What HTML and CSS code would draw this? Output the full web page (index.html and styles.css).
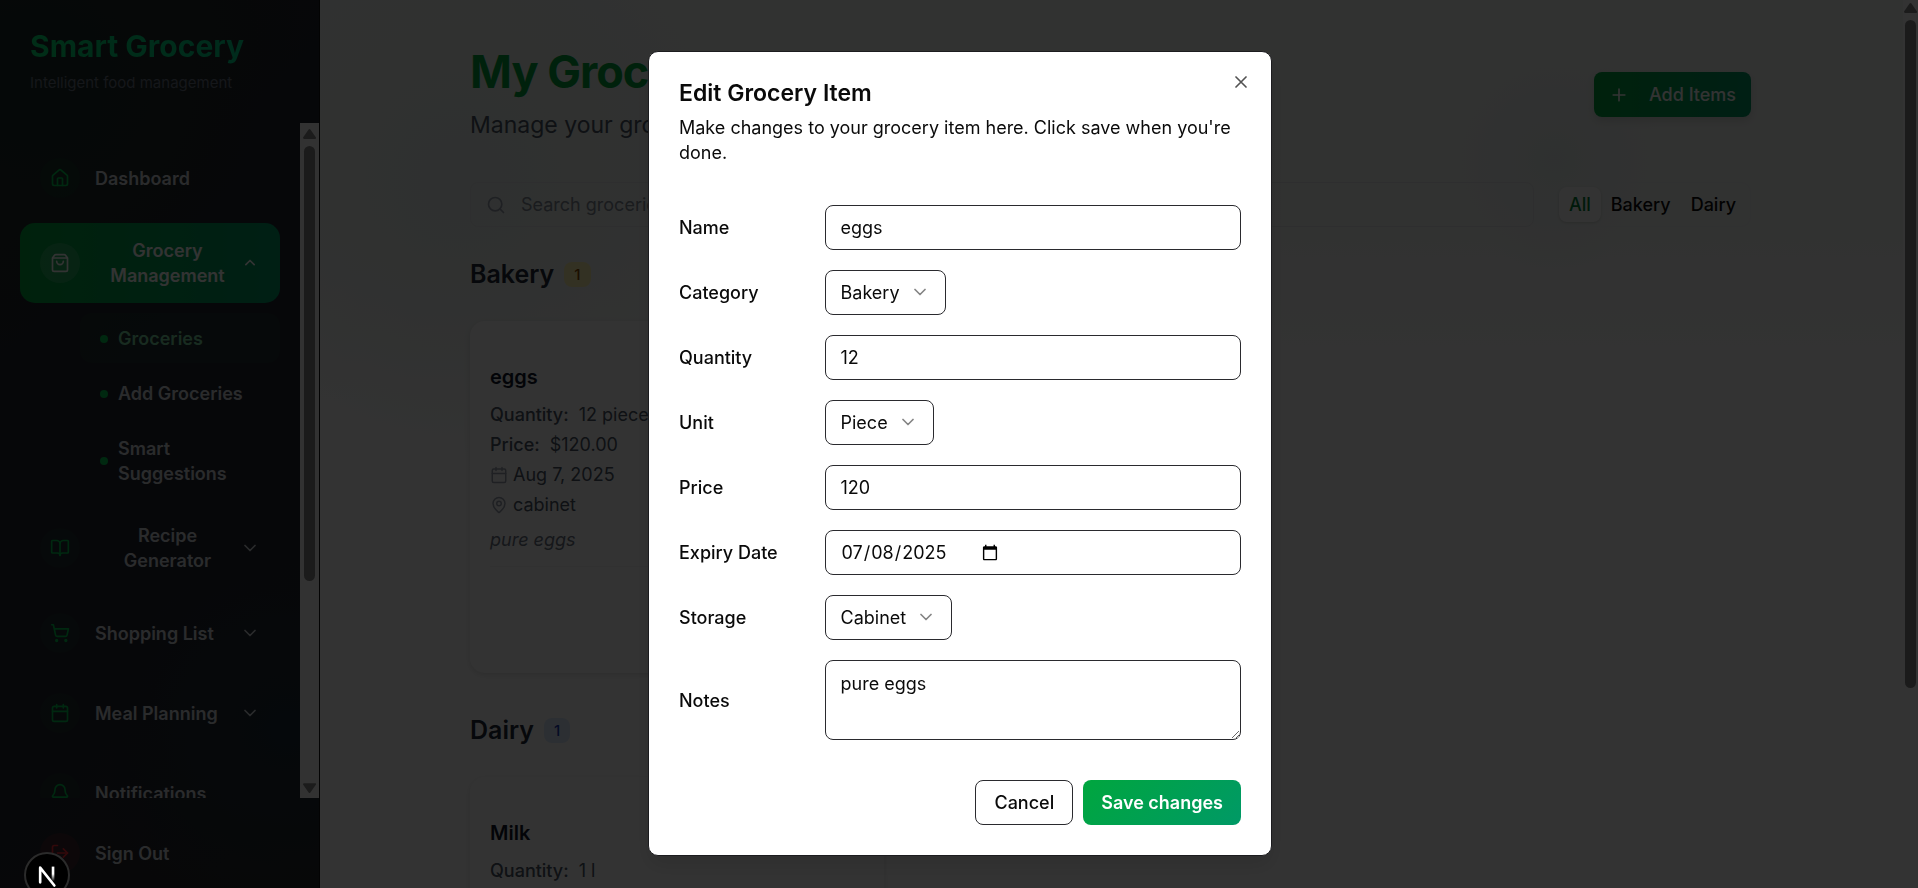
FILE: index.html
```html
<!DOCTYPE html>
<html lang="en">
<head>
    <meta charset="UTF-8">
    <meta name="viewport" content="width=device-width, initial-scale=1.0">
    <title>Smart Grocery</title>
    <link rel="stylesheet" href="styles.css">
</head>
<body>
    <!-- Shared icons -->
    <svg class="sprite" aria-hidden="true">
        <symbol id="chevron-down" viewBox="0 0 24 24"><path d="m6 9 6 6 6-6"/></symbol>
        <symbol id="chevron-up" viewBox="0 0 24 24"><path d="m17 14-5-5-5 5"/></symbol>
        <symbol id="calendar" viewBox="0 0 24 24"><path d="M8 2v4M16 2v4M3 10h18"/><rect width="18" height="18" x="3" y="4" rx="2"/></symbol>
        <symbol id="arrow-up" viewBox="0 0 12 9"><path d="M6 1 11 8H1Z"/></symbol>
        <symbol id="arrow-down" viewBox="0 0 12 9"><path d="M6 8 11 1H1Z"/></symbol>
    </svg>

    <div class="app">
        <!-- Sidebar -->
        <aside class="sidebar">
            <div class="brand">
                <h2>Smart Grocery</h2>
                <p>Intelligent food management</p>
            </div>

            <div class="nav-wrap">
                <nav class="nav">
                    <a class="nav-item" href="#">
                        <span class="nav-icon"><svg viewBox="0 0 24 24"><path d="M15 21v-8a1 1 0 0 0-1-1h-4a1 1 0 0 0-1 1v8"/><path d="M3 10a2 2 0 0 1 .709-1.528l7-5.999a2 2 0 0 1 2.582 0l7 5.999A2 2 0 0 1 21 10v9a2 2 0 0 1-2 2H5a2 2 0 0 1-2-2z"/></svg></span>
                        <span>Dashboard</span>
                    </a>
                    <button class="nav-item active" type="button">
                        <span class="nav-icon"><svg viewBox="0 0 24 24"><path d="M16 10a4 4 0 0 1-8 0"/><path d="M3.103 6.034h17.794"/><path d="M3.4 5.467a2 2 0 0 0-.4 1.2V20a2 2 0 0 0 2 2h14a2 2 0 0 0 2-2V6.667a2 2 0 0 0-.4-1.2l-2-2.667A2 2 0 0 0 17 2H7a2 2 0 0 0-1.6.8z"/></svg></span>
                        <span>Grocery Management</span>
                        <svg class="chevron"><use href="#chevron-up"/></svg>
                    </button>
                    <div class="subnav">
                        <a class="current" href="#">Groceries</a>
                        <a href="#">Add Groceries</a>
                        <a href="#">Smart Suggestions</a>
                    </div>
                    <button class="nav-item" type="button">
                        <span class="nav-icon"><svg viewBox="0 0 24 24"><path d="M12 7v14"/><path d="M3 18a1 1 0 0 1-1-1V4a1 1 0 0 1 1-1h5a4 4 0 0 1 4 4 4 4 0 0 1 4-4h5a1 1 0 0 1 1 1v13a1 1 0 0 1-1 1h-6a3 3 0 0 0-3 3 3 3 0 0 0-3-3z"/></svg></span>
                        <span>Recipe Generator</span>
                        <svg class="chevron"><use href="#chevron-down"/></svg>
                    </button>
                    <button class="nav-item" type="button">
                        <span class="nav-icon"><svg viewBox="0 0 24 24"><circle cx="8" cy="21" r="1"/><circle cx="19" cy="21" r="1"/><path d="M2.05 2.05h2l2.66 12.42a2 2 0 0 0 2 1.58h9.78a2 2 0 0 0 1.95-1.57l1.65-7.43H5.12"/></svg></span>
                        <span>Shopping List</span>
                        <svg class="chevron"><use href="#chevron-down"/></svg>
                    </button>
                    <button class="nav-item" type="button">
                        <span class="nav-icon"><svg><use href="#calendar"/></svg></span>
                        <span>Meal Planning</span>
                        <svg class="chevron"><use href="#chevron-down"/></svg>
                    </button>
                    <a class="nav-item" href="#">
                        <span class="nav-icon"><svg viewBox="0 0 24 24"><path d="M10.268 21a2 2 0 0 0 3.464 0"/><path d="M3.262 15.326A1 1 0 0 0 4 17h16a1 1 0 0 0 .74-1.673C19.41 13.956 18 12.499 18 8A6 6 0 0 0 6 8c0 4.499-1.411 5.956-2.738 7.326"/></svg></span>
                        <span>Notifications</span>
                    </a>
                </nav>
                <div class="scrollbar nav-scrollbar" aria-hidden="true">
                    <svg class="arrow"><use href="#arrow-up"/></svg>
                    <div class="track"><div class="thumb"></div></div>
                    <svg class="arrow"><use href="#arrow-down"/></svg>
                </div>
            </div>

            <div class="sidebar-footer">
                <button class="nav-item" type="button">
                    <span class="nav-icon danger"><svg viewBox="0 0 24 24"><path d="m16 17 5-5-5-5"/><path d="M21 12H9"/><path d="M9 21H5a2 2 0 0 1-2-2V5a2 2 0 0 1 2-2h4"/></svg></span>
                    <span>Sign Out</span>
                </button>
            </div>
        </aside>

        <!-- Main Content -->
        <main class="main">
            <div class="container">
                <header class="page-header">
                    <div>
                        <h1>My Groceries</h1>
                        <p>Manage your grocery inventory</p>
                    </div>
                    <button class="add-button" type="button">
                        <svg viewBox="0 0 24 24"><path d="M5 12h14M12 5v14"/></svg>
                        Add Items
                    </button>
                </header>

                <div class="toolbar">
                    <div class="search">
                        <svg viewBox="0 0 24 24"><circle cx="11" cy="11" r="8"/><path d="m21 21-4.300-4.300"/></svg>
                        <input type="search" aria-label="Search groceries" placeholder="Search groceries...">
                    </div>
                    <div class="tabs">
                        <button class="tab selected" type="button">All</button>
                        <button class="tab" type="button">Bakery</button>
                        <button class="tab" type="button">Dairy</button>
                    </div>
                </div>

                <section class="group">
                    <h2>Bakery <span class="badge yellow">1</span></h2>
                    <div class="cards">
                        <article class="card">
                            <h3>eggs</h3>
                            <p><strong>Quantity:</strong> 12 piece</p>
                            <p><strong>Price:</strong> $120.00</p>
                            <p class="meta"><svg><use href="#calendar"/></svg>Aug 7, 2025</p>
                            <p class="meta"><svg viewBox="0 0 24 24"><path d="M20 10c0 4.993-5.539 10.193-7.399 11.799a1 1 0 0 1-1.202 0C9.539 20.193 4 14.993 4 10a8 8 0 0 1 16 0"/><circle cx="12" cy="10" r="3"/></svg>cabinet</p>
                            <p class="notes">pure eggs</p>
                            <div class="card-footer"></div>
                        </article>
                    </div>
                </section>

                <section class="group">
                    <h2>Dairy <span class="badge blue">1</span></h2>
                    <div class="cards">
                        <article class="card">
                            <h3>Milk</h3>
                            <p><strong>Quantity:</strong> 1 l</p>
                        </article>
                    </div>
                </section>
            </div>
        </main>

        <div class="scrollbar page-scrollbar" aria-hidden="true">
            <svg class="arrow"><use href="#arrow-up"/></svg>
            <div class="track"><div class="thumb"></div></div>
        </div>
    </div>

    <!-- Edit dialog -->
    <div class="overlay">
        <form class="dialog" role="dialog" aria-labelledby="dialog-title">
            <button class="close" type="button" aria-label="Close"><svg viewBox="0 0 24 24"><path d="M18 6 6 18M6 6l12 12"/></svg></button>
            <div class="dialog-header">
                <h2 id="dialog-title">Edit Grocery Item</h2>
                <p>Make changes to your grocery item here. Click save when you're done.</p>
            </div>

            <div class="fields">
                <div class="field">
                    <label for="name">Name</label>
                    <input class="input" id="name" type="text" value="eggs">
                </div>
                <div class="field">
                    <label for="category">Category</label>
                    <div class="select">
                        <select id="category"><option selected>Bakery</option><option>Dairy</option></select>
                        <svg><use href="#chevron-down"/></svg>
                    </div>
                </div>
                <div class="field">
                    <label for="quantity">Quantity</label>
                    <input class="input" id="quantity" type="number" value="12">
                </div>
                <div class="field">
                    <label for="unit">Unit</label>
                    <div class="select">
                        <select id="unit"><option selected>Piece</option><option>l</option></select>
                        <svg><use href="#chevron-down"/></svg>
                    </div>
                </div>
                <div class="field">
                    <label for="price">Price</label>
                    <input class="input" id="price" type="number" value="120">
                </div>
                <div class="field">
                    <label for="expiry">Expiry Date</label>
                    <input class="input" id="expiry" type="date" value="2025-07-08">
                </div>
                <div class="field">
                    <label for="storage">Storage</label>
                    <div class="select">
                        <select id="storage"><option selected>Cabinet</option><option>Fridge</option></select>
                        <svg><use href="#chevron-down"/></svg>
                    </div>
                </div>
                <div class="field">
                    <label for="notes">Notes</label>
                    <textarea class="input" id="notes">pure eggs</textarea>
                </div>
            </div>

            <div class="dialog-footer">
                <button class="button" type="button">Cancel</button>
                <button class="button primary" type="submit">Save changes</button>
            </div>
        </form>
    </div>

    <button class="dev-badge" type="button" aria-label="Open dev tools">
        <svg viewBox="0 0 40 40">
            <defs>
                <linearGradient id="fade-a" x1="0" y1="0" x2="0" y2="1"><stop offset="0.500" stop-color="#fff"/><stop offset="1" stop-color="#fff" stop-opacity="0"/></linearGradient>
            </defs>
            <path d="M13.500 27V13L27 30" fill="none" stroke="#fff" stroke-width="2.500"/>
            <rect x="24.500" y="12" width="2.500" height="14" fill="url(#fade-a)"/>
        </svg>
    </button>
</body>
</html>
```
FILE: styles.css
```css
* {
    box-sizing: border-box;
}
body {
    margin: 0;
    font-family: Inter, "Liberation Sans", sans-serif;
    font-size: 18px;
    line-height: 25px;
    color: #0a0a0a;
    overflow: hidden;
}
h1, h2, h3, p {
    margin: 0;
}
button, input, select, textarea {
    font: inherit;
    color: inherit;
}
button {
    border: none;
    background: none;
    cursor: pointer;
}
a {
    color: inherit;
    text-decoration: none;
}
svg {
    width: 20px;
    height: 20px;
    flex-shrink: 0;
    fill: none;
    stroke: currentColor;
    stroke-width: 2;
    stroke-linecap: round;
    stroke-linejoin: round;
}
.sprite {
    display: none;
}
.app {
    display: flex;
    height: 100vh;
}

/* Sidebar */
.sidebar {
    width: 320px;
    flex-shrink: 0;
    display: flex;
    flex-direction: column;
    border-right: 1px solid #101010;
    background: radial-gradient(circle at 90% 82%, #1c2c38, transparent 200px),
                radial-gradient(circle at 10% 8%, #1a2c28, transparent 280px),
                linear-gradient(135deg, #282828, #202430 40%, #202430 60%, #282828);
}
.brand {
    height: 123px;
    padding: 26px 30px 0;
}
.brand h2 {
    font-size: 30px;
    line-height: 40px;
    font-weight: 700;
    color: transparent;
    background: linear-gradient(90deg, #05df72, #00d492);
    background-clip: text;
}
.brand p {
    margin-top: 4px;
    font-size: 15px;
    color: #6a7282;
}
.nav-wrap {
    flex: 1;
    min-height: 0;
    display: flex;
}
.nav {
    flex: 1;
    display: flex;
    flex-direction: column;
    gap: 10px;
    padding: 20px;
    overflow: hidden;
}
.nav-item {
    display: flex;
    flex-shrink: 0;
    align-items: center;
    gap: 15px;
    width: 100%;
    padding: 15px 20px;
    border-radius: 15px;
    font-weight: 600;
    color: #d1d5db;
    text-align: center;
}
.nav-item .chevron {
    margin-left: auto;
}
.nav-item:has(.chevron) {
    gap: 0;
}
.nav-item:has(.chevron) .nav-icon {
    margin-right: 15px;
}
.nav-item.active {
    color: #fff;
    background: linear-gradient(90deg, #00a63e, #009966);
}
.nav-icon {
    display: grid;
    place-items: center;
    flex-shrink: 0;
    width: 40px;
    height: 40px;
    border-radius: 50%;
    color: #00c950;
    background: rgba(0, 201, 80, 0.06);
}
.active .nav-icon {
    color: #fff;
    background: rgba(255, 255, 255, 0.15);
}
.nav-icon.danger {
    color: #fb2c36;
    background: rgba(251, 44, 54, 0.12);
}
.subnav {
    display: flex;
    flex-direction: column;
    gap: 5px;
    padding-left: 60px;
}
.subnav a {
    display: flex;
    align-items: center;
    gap: 10px;
    padding: 13px 20px 12px;
    border-radius: 12px;
    font-weight: 600;
    color: #d1d5db;
}
.subnav a::before {
    content: "";
    flex-shrink: 0;
    width: 8px;
    height: 8px;
    border-radius: 50%;
    background: #00c950;
}
.subnav .current {
    color: #7bd6a0;
    background: rgba(0, 201, 80, 0.06);
}
.sidebar-footer {
    padding: 20px 20px 0;
}

/* Scrollbars */
.scrollbar {
    display: flex;
    flex-direction: column;
    align-items: center;
    flex-shrink: 0;
}
.scrollbar .arrow {
    width: 13px;
    height: 10px;
    fill: #888;
    stroke: #888;
}
.track {
    flex: 1;
    width: 11px;
}
.thumb {
    border-radius: 6px;
    background: #888;
}
.nav-scrollbar {
    width: 19px;
    padding: 6px 0 5px;
    gap: 7px;
    background: #fafafa;
}
.nav-scrollbar .thumb {
    height: 69%;
}
.page-scrollbar {
    width: 15px;
    padding-top: 3px;
    gap: 7px;
    background: #fcfcfc;
}
.page-scrollbar .thumb {
    height: 77%;
}

/* Main content */
.main {
    flex: 1;
    min-width: 0;
    padding: 41px 42px 0 40px;
    background: radial-gradient(circle at 78% 18%, #eaf1f0, transparent 110px),
                radial-gradient(circle at 9% 20%, #e9f0ed, transparent 300px),
                linear-gradient(180deg, #f4f8f4, #f6f8f6 240px, #fff 400px);
}
.container {
    max-width: 1281px;
    margin: 0 auto;
}
.page-header {
    display: flex;
    justify-content: space-between;
    align-items: flex-end;
}
.page-header h1 {
    font-size: 45px;
    line-height: 62px;
    font-weight: 700;
    letter-spacing: -1px;
    color: #00a63e;
}
.page-header p {
    margin-top: 6px;
    font-size: 23px;
    line-height: 32px;
    color: #4a5565;
}
.add-button {
    display: flex;
    align-items: center;
    gap: 20px;
    height: 45px;
    margin-bottom: 24px;
    padding: 0 15px;
    border-radius: 8px;
    font-weight: 500;
    color: #fff;
    background: linear-gradient(90deg, #00a63e, #009966);
    box-shadow: 0 4px 8px rgba(0, 0, 0, 0.12);
}
.toolbar {
    display: flex;
    gap: 20px;
    margin-top: 41px;
}
.search {
    flex: 1;
    display: flex;
    align-items: center;
    gap: 15px;
    height: 45px;
    padding: 0 15px;
    border: 1px solid #e5e7eb;
    border-radius: 8px;
    color: #99a1af;
}
.search input {
    flex: 1;
    padding: 0;
    border: none;
    outline: none;
    background: none;
}
.search input::placeholder {
    color: #838a96;
}
.tabs {
    display: flex;
    height: 45px;
    padding: 4px;
    border: 1px solid #f0f2f2;
    border-radius: 10px;
}
.tab {
    padding: 0 10px;
    border-radius: 8px;
    font-weight: 500;
}
.tab.selected {
    color: #008236;
    background: #fff;
    box-shadow: 0 1px 3px rgba(0, 0, 0, 0.15);
}
.group {
    margin-bottom: 38px;
}
.toolbar + .group {
    margin-top: 28px;
}
.group h2 {
    display: flex;
    align-items: center;
    gap: 10px;
    font-size: 25px;
    line-height: 38px;
    font-weight: 600;
    color: #1e2939;
}
.badge {
    padding: 0 10px;
    border-radius: 8px;
    font-size: 15px;
    line-height: 25px;
    font-weight: 500;
}
.badge.yellow {
    color: #894b00;
    background: #fef3b0;
}
.badge.blue {
    color: #193cb8;
    background: #dbeafe;
}
.cards {
    display: grid;
    grid-template-columns: repeat(3, 1fr);
    gap: 20px;
    margin-top: 28px;
}
.card {
    min-height: 352px;
    padding: 42px 20px 20px;
    border-radius: 15px;
    background: #fff;
    box-shadow: 0 2px 6px rgba(0, 0, 0, 0.12);
    color: #4a5565;
}
.card h3 {
    margin-bottom: 11px;
    font-size: 20px;
    line-height: 28px;
    font-weight: 600;
    color: #101828;
}
.card p {
    display: flex;
    gap: 10px;
    margin-bottom: 5px;
}
.card strong {
    font-weight: 500;
    color: #4a5565;
}
.card .meta {
    align-items: center;
    gap: 5px;
}
.meta svg {
    width: 18px;
    height: 18px;
    color: #99a1af;
}
.card .notes {
    margin-top: 10px;
    font-style: italic;
    color: #6a7282;
}
.card-footer {
    margin-top: 14px;
    border-top: 1px solid #f3f4f6;
}

/* Dialog */
.overlay {
    position: fixed;
    inset: 0;
    display: flex;
    justify-content: center;
    align-items: flex-start;
    padding: 51px 0 0 2px;
    background: rgba(0, 0, 0, 0.8);
}
.dialog {
    position: relative;
    width: 100%;
    max-width: 624px;
    padding: 30px;
    border: 1px solid #1c1c1f;
    border-radius: 10px;
    background: #fff;
    box-shadow: 0 10px 20px rgba(0, 0, 0, 0.1);
}
.close {
    position: absolute;
    top: 20px;
    right: 20px;
    display: grid;
    padding: 0;
    opacity: 0.7;
}
.dialog-header h2 {
    font-size: 23px;
    line-height: 23px;
    font-weight: 600;
}
.dialog-header p {
    margin-top: 10px;
}
.fields {
    display: grid;
    gap: 20px;
    margin: 40px 0;
}
.field {
    display: grid;
    grid-template-columns: repeat(4, 1fr);
    gap: 20px;
    align-items: center;
}
.field label {
    font-weight: 500;
}
.input {
    grid-column: span 3;
    display: flex;
    width: 100%;
    min-width: 0;
    height: 45px;
    padding: 0 15px;
    border: 1px solid #2a2a2e;
    border-radius: 8px;
    background: #fff;
}
input[type="number"] {
    appearance: textfield;
}
textarea.input {
    height: 80px;
    padding: 10px 15px;
    resize: vertical;
}
.select {
    grid-column: span 3;
    position: relative;
    justify-self: start;
}
.select select {
    display: block;
    appearance: none;
    field-sizing: content;
    height: 45px;
    padding: 0 45px 0 15px;
    border: 1px solid #2a2a2e;
    border-radius: 8px;
    background: #fff;
}
.select svg {
    position: absolute;
    top: 12px;
    right: 16px;
    opacity: 0.5;
    pointer-events: none;
}
.dialog-footer {
    display: flex;
    justify-content: flex-end;
    gap: 10px;
}
.button {
    height: 45px;
    padding: 0 18px;
    border: 1px solid #2a2a2e;
    border-radius: 8px;
    font-weight: 500;
}
.button.primary {
    border: none;
    font-weight: 600;
    color: #fff;
    background: linear-gradient(135deg, #00a63e, #009966);
}

.dev-badge {
    position: fixed;
    left: 24px;
    bottom: -10px;
    width: 46px;
    height: 46px;
    padding: 0;
    border: 2px solid #2b2b2b;
    border-radius: 50%;
    background: #000;
}
.dev-badge svg {
    display: block;
    width: 42px;
    height: 42px;
    stroke: none;
}
```
